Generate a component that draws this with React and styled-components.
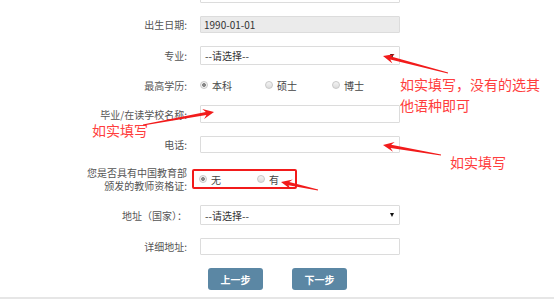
import React from "react";
import styled, { createGlobalStyle } from "styled-components";

const Global = createGlobalStyle`
  html, body { margin: 0; padding: 0; background: #fff; }
  body { font-family: "Noto Sans CJK SC", "Noto Sans", sans-serif; overflow: hidden; }
`;

const Page = styled.div`
  position: relative;
  width: 554px;
  height: 306px;
  overflow: hidden;
`;

const Form = styled.div`
  display: flex;
  flex-direction: column;
  gap: 13px;
  margin-top: -14px;
`;

const Row = styled.div`
  display: flex;
  align-items: center;
  height: ${(p) => p.$h}px;
`;

const Label = styled.div`
  width: ${(p) => p.$w || 187}px;
  margin-left: ${(p) => 187 - (p.$w || 187)}px;
  margin-right: 13px;
  text-align: right;
  font-size: 10px;
  line-height: 13px;
  color: #555;
  flex-shrink: 0;
`;

const Input = styled.div`
  box-sizing: border-box;
  width: 200px;
  height: 100%;
  border: 1px solid #dcdcdc;
  border-radius: 1px;
  background: ${(p) => (p.$disabled ? "#ebebeb" : "#fff")};
  font-size: 10px;
  color: #333;
  display: flex;
  align-items: center;
  padding: 0 3px;
`;

const Select = styled(Input)`
  justify-content: space-between;
  padding: 0 5px 0 4px;
  color: #333;
`;

const Caret = styled.span`
  width: 0;
  height: 0;
  border-left: 2.5px solid transparent;
  border-right: 2.5px solid transparent;
  border-top: 4px solid #111;
`;

const RadioGroup = styled.div`
  display: flex;
  align-items: center;
  ${(p) =>
    p.$boxed &&
    `
    box-sizing: border-box;
    height: 20px;
    width: 105px;
    margin-left: -8px;
    padding-left: 5px;
    border: 2px solid #f21b1b;
    border-radius: 2px;
  `}
`;

const Radio = styled.label`
  display: flex;
  align-items: center;
  gap: 4px;
  width: ${(p) => p.$w}px;
  font-size: 10px;
  color: #444;
  flex-shrink: 0;
`;

const Dot = styled.span`
  box-sizing: border-box;
  width: 8px;
  height: 8px;
  border-radius: 50%;
  border: 1px solid #c8c8c8;
  background: ${(p) =>
    p.$on
      ? "radial-gradient(circle, #888 0 1.6px, #f2f2f2 2.2px)"
      : "linear-gradient(#f4f4f4, #dcdcdc)"};
`;

const Buttons = styled.div`
  display: flex;
  gap: 29px;
  padding-left: 208px;
  height: 22px;
`;

const Button = styled.button`
  width: 55px;
  height: 22px;
  border: none;
  border-radius: 3px;
  background: #5b87a4;
  color: #fff;
  font-family: "Noto Sans CJK SC", sans-serif;
  font-size: 10px;
  font-weight: bold;
  padding: 0;
`;

const Divider = styled.div`
  margin-top: -6px;
  height: 2px;
  background: #e6e6e6;
`;

const Note = styled.div`
  position: absolute;
  left: ${(p) => p.$x}px;
  top: ${(p) => p.$y}px;
  color: #ff3d3d;
  font-size: 14px;
  line-height: ${(p) => p.$lh || 21}px;
  white-space: nowrap;
`;

const Overlay = styled.svg`
  position: absolute;
  left: 0;
  top: 0;
  pointer-events: none;
`;

function arrowPoints(x1, y1, x2, y2) {
  const dx = x2 - x1;
  const dy = y2 - y1;
  const len = Math.hypot(dx, dy);
  const ux = dx / len;
  const uy = dy / len;
  const nx = -uy;
  const ny = ux;
  const L = 11;
  const W = 5;
  const bx = x2 - ux * L;
  const by = y2 - uy * L;
  const nb = x2 - ux * (L - 3);
  const nby = y2 - uy * (L - 3);
  const pts = [
    [x1 + nx * 0.4, y1 + ny * 0.4],
    [nb + nx * 1.6, nby + ny * 1.6],
    [bx + nx * W, by + ny * W],
    [x2, y2],
    [bx - nx * W, by - ny * W],
    [nb - nx * 1.6, nby - ny * 1.6],
    [x1 - nx * 0.4, y1 - ny * 0.4],
  ];
  return pts.map((p) => p.map((v) => v.toFixed(1)).join(",")).join(" ");
}

const arrows = [
  [448, 73, 383, 56],
  [441, 155, 383, 145],
  [143, 125, 214, 112],
  [318, 190, 281, 182],
];

export default function App() {
  return (
    <Page>
      <Global />
      <Form>
        <Row $h={17}>
          <Label />
          <Input />
        </Row>
        <Row $h={17}>
          <Label>出生日期:</Label>
          <Input $disabled>1990-01-01</Input>
        </Row>
        <Row $h={19}>
          <Label>专业:</Label>
          <Select>
            --请选择--
            <Caret />
          </Select>
        </Row>
        <Row $h={14}>
          <Label>最高学历:</Label>
          <RadioGroup>
            <Radio $w={65}>
              <Dot $on />
              本科
            </Radio>
            <Radio $w={67}>
              <Dot />
              硕士
            </Radio>
            <Radio $w={40}>
              <Dot />
              博士
            </Radio>
          </RadioGroup>
        </Row>
        <Row $h={18}>
          <Label>毕业/在读学校名称:</Label>
          <Input />
        </Row>
        <Row $h={17}>
          <Label>电话:</Label>
          <Input />
        </Row>
        <Row $h={26}>
          <Label $w={100}>您是否具有中国教育部颁发的教师资格证:</Label>
          <RadioGroup $boxed>
            <Radio $w={58}>
              <Dot $on />
              无
            </Radio>
            <Radio $w={30}>
              <Dot />
              有
            </Radio>
          </RadioGroup>
        </Row>
        <Row $h={20}>
          <Label>地址（国家）：</Label>
          <Select>
            --请选择--
            <Caret />
          </Select>
        </Row>
        <Row $h={17}>
          <Label>详细地址:</Label>
          <Input />
        </Row>
        <Buttons>
          <Button>上一步</Button>
          <Button>下一步</Button>
        </Buttons>
        <Divider />
      </Form>

      <Note $x={400} $y={74}>
        如实填写，没有的选其
        <br />
        他语种即可
      </Note>
      <Note $x={92} $y={123} $lh={15}>如实填写</Note>
      <Note $x={450} $y={155} $lh={15}>如实填写</Note>

      <Overlay width="554" height="306" viewBox="0 0 554 306">
        {arrows.map((a, i) => (
          <polygon key={i} points={arrowPoints(...a)} fill="#f21b1b" />
        ))}
      </Overlay>
    </Page>
  );
}
